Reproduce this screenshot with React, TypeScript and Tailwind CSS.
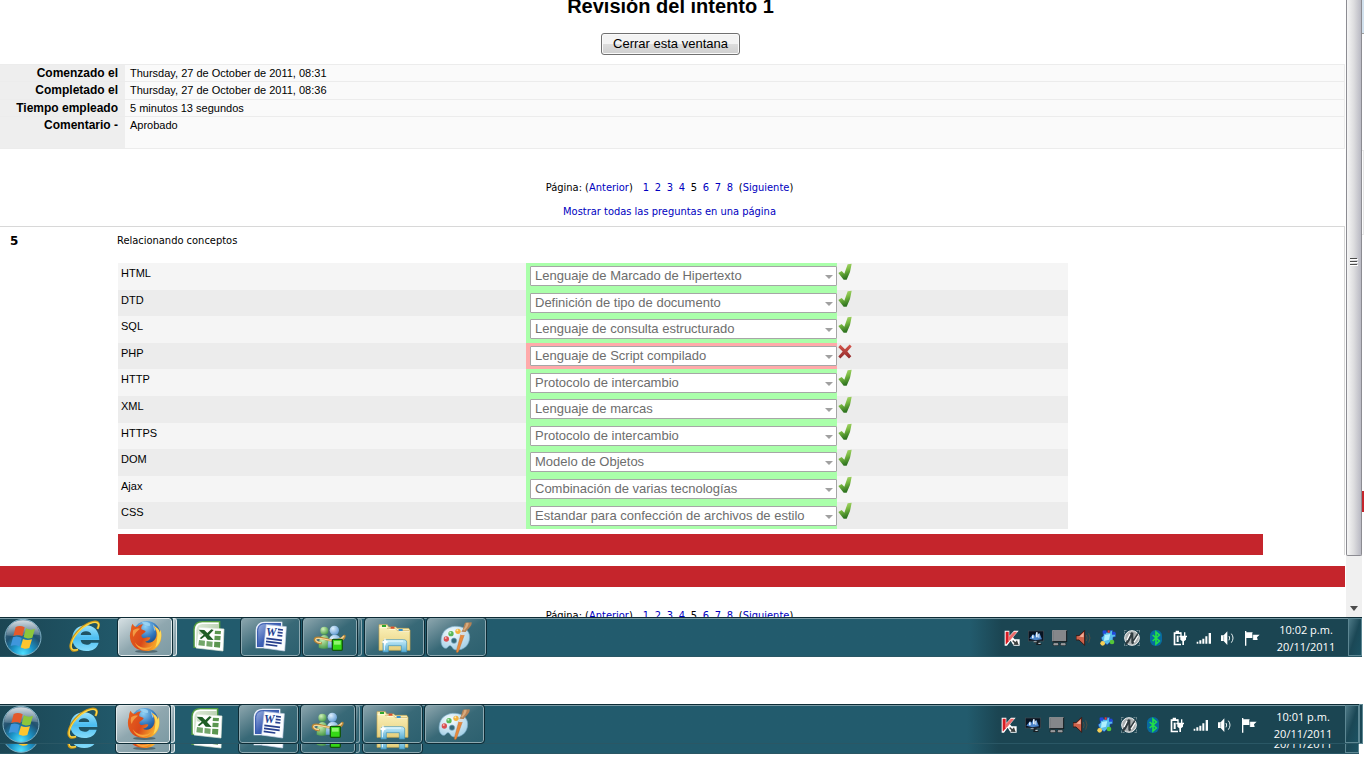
import type { ReactNode } from "react";

const attempt = [
  { label: "Comenzado el", value: "Thursday, 27 de October de 2011, 08:31", row: "h-[17px]" },
  { label: "Completado el", value: "Thursday, 27 de October de 2011, 08:36", row: "h-[18px]" },
  { label: "Tiempo empleado", value: "5 minutos 13 segundos", row: "h-[17px]" },
  { label: "Comentario -", value: "Aprobado", row: "h-8" },
];

const answers = [
  { term: "HTML", value: "Lenguaje de Marcado de Hipertexto", ok: true },
  { term: "DTD", value: "Definición de tipo de documento", ok: true },
  { term: "SQL", value: "Lenguaje de consulta estructurado", ok: true },
  { term: "PHP", value: "Lenguaje de Script compilado", ok: false },
  { term: "HTTP", value: "Protocolo de intercambio", ok: true },
  { term: "XML", value: "Lenguaje de marcas", ok: true },
  { term: "HTTPS", value: "Protocolo de intercambio", ok: true },
  { term: "DOM", value: "Modelo de Objetos", ok: true },
  { term: "Ajax", value: "Combinación de varias tecnologías", ok: true },
  { term: "CSS", value: "Estandar para confección de archivos de estilo", ok: true },
];

const humanist = "font-['DejaVu_Sans_Condensed','DejaVu_Sans',sans-serif]";

function Pagination() {
  return (
    <nav className={`flex justify-center text-[11px] leading-[18px] text-black ${humanist}`}>
      <span className="mr-[10px]">
        Página: (<a href="#anterior" className="text-[#0000c0]">Anterior</a>)
      </span>
      {[1, 2, 3, 4, 5, 6, 7, 8].map((n) =>
        n === 5 ? (
          <span key={n} className="w-3">{n}</span>
        ) : (
          <a key={n} href={`#p${n}`} className="w-3 text-[#0000c0]">{n}</a>
        ),
      )}
      <span>
        (<a href="#siguiente" className="text-[#0000c0]">Siguiente</a>)
      </span>
    </nav>
  );
}

function CheckMark() {
  return (
    <svg viewBox="0 0 42 51" className="h-[17px] w-[14px]" aria-label="Correcto">
      <defs>
        <linearGradient id="tick" x1="0" y1="0" x2="0.3" y2="1">
          <stop offset="0" stopColor="#c0e482" />
          <stop offset="0.5" stopColor="#7cbc42" />
          <stop offset="1" stopColor="#2f7420" />
        </linearGradient>
      </defs>
      <path d="M1 30 L11 24 L19 32 L29 4 L41 2 L36 27 L26 50 L17 50Z" fill="url(#tick)" />
    </svg>
  );
}

function CrossMark() {
  return (
    <svg viewBox="0 0 42 50" className="h-[17px] w-[14px]" aria-label="Incorrecto">
      <defs>
        <linearGradient id="cross" x1="0" y1="0" x2="0" y2="1">
          <stop offset="0" stopColor="#d8564c" />
          <stop offset="1" stopColor="#8f2a2c" />
        </linearGradient>
      </defs>
      <path d="M7 5 L21 18 L35 4 L41 10 L28 25 L40 39 L33 46 L20 33 L7 46 L1 40 L14 25 L1 12Z" fill="url(#cross)" />
    </svg>
  );
}

function StartOrb() {
  return (
    <svg viewBox="12 54 114 114" className="h-[38px] w-[38px]" aria-hidden="true">
      <defs>
        <radialGradient id="orb" cx="0.5" cy="0.95" r="0.95">
          <stop offset="0" stopColor="#4fe0ff" />
          <stop offset="0.3" stopColor="#1b94c8" />
          <stop offset="0.6" stopColor="#20516f" />
          <stop offset="1" stopColor="#52748a" />
        </radialGradient>
        <linearGradient id="orbShine" x1="0" y1="0" x2="0" y2="1">
          <stop offset="0" stopColor="#fff" stopOpacity="0.75" />
          <stop offset="1" stopColor="#fff" stopOpacity="0.15" />
        </linearGradient>
      </defs>
      <circle cx="69" cy="112" r="54" fill="url(#orb)" stroke="#7fb0c4" strokeWidth="3" />
      <path d="M18 106 C22 76 42 61 69 61 C96 61 116 76 120 106 C90 98 50 114 18 106Z" fill="url(#orbShine)" />
      <path d="M47 81 C56 76 65 77 74 82 L67 109 C58 104 50 104 40 108Z" fill="#e4592b" />
      <path d="M78 85 C87 90 95 90 105 86 L97 113 C88 117 80 116 71 111Z" fill="#8cc63c" />
      <path d="M39 112 C48 108 57 109 65 114 L58 140 C50 135 42 135 32 138Z" fill="#3f96dc" />
      <path d="M69 117 C78 121 86 121 96 118 L88 144 C79 148 71 147 62 142Z" fill="#fdc52f" />
    </svg>
  );
}

function ExplorerE() {
  return (
    <svg viewBox="207 54 96 114" className="h-[38px] w-8" aria-hidden="true">
      <defs>
        <linearGradient id="ie" x1="0" y1="0" x2="0" y2="1">
          <stop offset="0" stopColor="#9be2fb" />
          <stop offset="0.5" stopColor="#4bbdf1" />
          <stop offset="1" stopColor="#86dcfb" />
        </linearGradient>
      </defs>
      <path
        fillRule="evenodd"
        d="M258 76 C281 76 298 92 298 120 L242 120 C243 129 249 134 260 134 C267 134 271 132 273 128 L296 128 C291 145 278 153 259 153 C234 153 217 138 217 115 C217 92 234 76 258 76Z M242 105 L274 105 C273 98 267 94 258 94 C249 94 243 98 242 105Z"
        fill="url(#ie)"
      />
      <path d="M292 87 C303 68 292 59 268 69 C242 80 217 109 212 134 C209 152 220 155 234 149" fill="none" stroke="#c99618" strokeWidth="7" />
      <path d="M293 86 C301 69 291 62 269 71 C243 82 219 109 214 133 C211 149 220 153 234 148" fill="none" stroke="#fbd749" strokeWidth="4" />
    </svg>
  );
}

function Firefox() {
  return (
    <svg viewBox="384 54 99 114" className="h-[38px] w-[33px]" aria-hidden="true">
      <defs>
        <radialGradient id="globe" cx="0.45" cy="0.2" r="0.8">
          <stop offset="0" stopColor="#8fd1f5" />
          <stop offset="0.5" stopColor="#3177bd" />
          <stop offset="1" stopColor="#122e68" />
        </radialGradient>
        <linearGradient id="fox" x1="0" y1="0" x2="1" y2="0.4">
          <stop offset="0" stopColor="#e8621d" />
          <stop offset="0.55" stopColor="#d9481a" />
          <stop offset="1" stopColor="#f9ad2b" />
        </linearGradient>
      </defs>
      <ellipse cx="436" cy="154" rx="34" ry="5" fill="#2f4650" opacity="0.6" />
      <circle cx="437" cy="104" r="41" fill="url(#globe)" />
      <path d="M422 66 C440 64 452 70 446 78 C436 78 428 74 422 66Z M455 72 L470 88 L460 92Z" fill="#a9ddf7" opacity="0.7" />
      <path
        d="M395 71 C398 78 402 80 408 81 C414 75 421 73 427 73 C422 78 420 82 421 88 L434 93 C433 98 426 101 422 104 C420 108 422 112 427 114 C435 115 441 110 448 113 C448 118 440 123 432 125 C440 131 456 129 463 116 C470 103 466 92 458 77 C472 85 476 91 476 98 L479 90 C485 116 478 135 461 147 C444 157 417 155 401 142 C387 129 383 107 390 90 C390 83 391 77 395 71Z"
        fill="url(#fox)"
      />
      <path d="M458 77 C472 85 476 91 476 98 L479 90 C484 113 477 132 463 142 C468 128 468 120 469 108 C470 96 465 87 458 77Z" fill="#fed957" />
      <path d="M401 126 C412 145 440 149 457 136 C443 158 410 153 401 126Z" fill="#f8a43a" />
      <path d="M397 90 C403 86 411 84 417 86 C409 92 401 100 398 111 C394 104 395 96 397 90Z" fill="#f39a43" />
    </svg>
  );
}

function Excel() {
  return (
    <svg viewBox="579 54 96 114" className="h-[38px] w-8" aria-hidden="true">
      <defs>
        <linearGradient id="xl" x1="0" y1="0" x2="1" y2="1">
          <stop offset="0" stopColor="#e6efe0" />
          <stop offset="1" stopColor="#9fbd94" />
        </linearGradient>
      </defs>
      <path d="M582 142 V88 C583 72 592 65 607 65 H659 V142Z" fill="url(#xl)" stroke="#4e9a3e" strokeWidth="4" />
      <path d="M587 140 V90 C588 76 595 70 607 70 H655" fill="none" stroke="#fff" strokeWidth="4" />
      <path d="M597 82 L672 87 L669 153 L588 144Z" fill="#fff" stroke="#dbe7d7" strokeWidth="2" />
      <g fill="#5b9650">
        <path d="M645 92 L663 93 L662 103 L644 102Z M644 107 L662 108 L661 121 L643 120Z M643 125 L661 126 L660 143 L642 141Z" />
        <path d="M620 123 L638 125 L637 141 L619 139Z M597 120 L615 122 L614 138 L595 136Z" opacity="0.85" />
        <path d="M598 91 L609 92 L606 105 L597 103Z" opacity="0.35" />
      </g>
      <path d="M596 89 L613 90 L622 99 L634 88 L641 90 L627 105 L641 120 L623 119 L615 109 L604 117 L599 115 L611 104Z" fill="#1f5d25" />
    </svg>
  );
}

function Word() {
  return (
    <svg viewBox="43 54 96 114" className="h-[38px] w-8" aria-hidden="true">
      <defs>
        <linearGradient id="wd" x1="0" y1="0" x2="1" y2="1">
          <stop offset="0" stopColor="#a9bce6" />
          <stop offset="0.5" stopColor="#3f62b6" />
          <stop offset="1" stopColor="#1e3f97" />
        </linearGradient>
      </defs>
      <path d="M47 143 V91 C48 74 57 67 72 67 H123 V143Z" fill="url(#wd)" stroke="#e6edf8" strokeWidth="4" />
      <path d="M51 139 V92 C52 78 60 71 72 71 H120" fill="none" stroke="#3658ad" strokeWidth="3" />
      <path d="M77 74 L137 80 L132 153 L69 144Z" fill="#fbfdff" stroke="#c7d3ea" strokeWidth="2" />
      <text x="76" y="109" fontFamily="Liberation Serif, serif" fontSize="36" fontWeight="bold" fontStyle="italic" fill="#223f91">W</text>
      <path d="M112 88 L127 90 M111 97 L126 99 M110 106 L125 108 M77 115 L124 121 M76 124 L123 130 M75 133 L110 138" stroke="#263f8d" strokeWidth="5" />
    </svg>
  );
}

function Messenger() {
  return (
    <svg viewBox="220 54 102 114" className="h-[38px] w-[34px]" aria-hidden="true">
      <defs>
        <radialGradient id="msnG" cx="0.35" cy="0.3" r="0.8">
          <stop offset="0" stopColor="#d2f3bb" />
          <stop offset="1" stopColor="#3f9440" />
        </radialGradient>
        <radialGradient id="msnB" cx="0.35" cy="0.3" r="0.8">
          <stop offset="0" stopColor="#dff1ff" />
          <stop offset="1" stopColor="#5795cf" />
        </radialGradient>
      </defs>
      <path d="M314 105 C319 108 314 116 306 122" fill="none" stroke="#c58d34" strokeWidth="4" />
      <path d="M237 143 C237 119 242 105 254 105 C267 105 270 118 270 143 C260 147 246 147 237 143Z" fill="url(#msnG)" />
      <circle cx="254" cy="92" r="12" fill="url(#msnG)" />
      <path d="M264 143 C264 116 272 104 285 104 C300 104 306 116 306 143Z" fill="url(#msnB)" />
      <circle cx="284" cy="91" r="14" fill="url(#msnB)" />
      <path d="M246 130 C229 128 221 121 228 114 C239 108 259 120 281 122 C297 122 308 117 314 107" fill="none" stroke="#b78331" strokeWidth="7" />
      <path d="M244 128 C230 126 225 120 230 116 C240 111 259 121 281 121 C296 121 307 116 313 108" fill="none" stroke="#f5d69a" strokeWidth="4" />
      <rect x="278" y="118" width="30" height="33" rx="3" fill="#35d816" stroke="#12550f" strokeWidth="4" />
      <rect x="283" y="123" width="20" height="11" fill="#8ff56e" />
    </svg>
  );
}

function Folders() {
  return (
    <svg viewBox="415 54 102 114" className="h-[38px] w-[34px]" aria-hidden="true">
      <defs>
        <linearGradient id="fold" x1="0" y1="0" x2="0" y2="1">
          <stop offset="0" stopColor="#fcf3bd" />
          <stop offset="1" stopColor="#e6d07e" />
        </linearGradient>
        <linearGradient id="glass" x1="0" y1="0" x2="0" y2="1">
          <stop offset="0" stopColor="#c9effc" />
          <stop offset="1" stopColor="#58acd3" />
        </linearGradient>
      </defs>
      <path d="M418 151 V74 H443 L447 81 H468 L472 85 H507 L511 91 V151Z" fill="url(#fold)" stroke="#c8a850" strokeWidth="2" />
      <path d="M420 83 H443 L450 88 H472 L479 94 H509" fill="none" stroke="#fffbe0" strokeWidth="3" />
      <path d="M442 85 H466 L473 92 H509" fill="none" stroke="#c6a75b" strokeWidth="2" />
      <rect x="427" y="75" width="12" height="6" fill="#30a82b" />
      <rect x="453" y="80" width="11" height="6" fill="#df4c2d" />
      <rect x="477" y="87" width="12" height="6" fill="#3592cf" />
      <path d="M430 156 V127 C430 121 434 119 440 119 H491 C497 119 501 121 501 127 V156 H485 V137 H446 V156Z" fill="url(#glass)" stroke="#3f92b8" strokeWidth="2" />
      <path d="M434 151 V128 C434 124 436 123 442 123 H490" fill="none" stroke="#edfbff" strokeWidth="3" />
      <path d="M436 113 L439 122 L447 126 L439 130 L436 139 L433 130 L425 126 L433 122Z" fill="#fff" />
    </svg>
  );
}

function Paint() {
  return (
    <svg viewBox="601 54 99 114" className="h-[38px] w-[33px]" aria-hidden="true">
      <defs>
        <radialGradient id="pal" cx="0.4" cy="0.3" r="0.8">
          <stop offset="0" stopColor="#f8fdff" />
          <stop offset="1" stopColor="#9ccbe4" />
        </radialGradient>
      </defs>
      <path
        fillRule="evenodd"
        d="M644 79 C668 77 690 89 690 111 C690 137 671 151 650 150 C637 149 639 139 632 137 C624 136 625 148 614 144 C603 138 602 120 607 106 C613 89 627 81 644 79Z M643 114 A8 8 0 1 0 643 130 A8 8 0 1 0 643 114Z"
        fill="url(#pal)"
        stroke="#76a9c4"
        strokeWidth="2"
      />
      <circle cx="620" cy="117" r="8" fill="#d94f51" />
      <circle cx="634" cy="101" r="8" fill="#57b757" />
      <circle cx="655" cy="94" r="8" fill="#f3b23c" />
      <circle cx="618" cy="114" r="3" fill="#f7b5ae" />
      <circle cx="632" cy="98" r="3" fill="#bfeabd" />
      <circle cx="653" cy="91" r="3" fill="#fde4a3" />
      <path d="M663 104 L674 105 L656 156 C650 161 649 154 651 149Z" fill="#e78a3d" stroke="#b35d20" strokeWidth="1" />
      <path d="M666 94 L677 95 L674 106 L663 105Z" fill="#d7dde0" />
      <path d="M665 95 C672 87 671 78 676 68 L696 67 C697 79 687 84 678 96Z" fill="#b48256" />
      <path d="M670 89 C677 81 678 76 680 68 L687 68 C687 77 681 84 674 92Z" fill="#d8ab7d" />
    </svg>
  );
}

function TrayIcon({ label, children }: { label: string; children: ReactNode }) {
  return (
    <button type="button" aria-label={label} className="flex w-6 items-center justify-center">
      <svg viewBox="0 0 48 48" className="h-4 w-4">{children}</svg>
    </button>
  );
}

function Tray() {
  return (
    <div className="flex pt-[2px]">
      <TrayIcon label="Antivirus">
        <path d="M2 2 H16 V18 L30 2 H44 L27 22 L32 28 H47 V47 H29 L20 32 L9 47 H2Z" fill="#fff" />
        <path d="M5 5 H14 V22 V34 L7 43 H5Z" fill="#d71c24" />
        <path d="M13 22 L30 5 H40 L19 30 L13 34Z" fill="#ea6a6a" />
        <path d="M27 30 L34 36 L39 31 L44 45 L28 44 L31 40 L25 34Z" fill="#3c4140" />
      </TrayIcon>
      <TrayIcon label="Monitor de red">
        <rect x="1" y="3" width="46" height="30" fill="#071321" stroke="#464b50" strokeWidth="2" />
        <path d="M4 26 L15 12 L20 17 L25 6 L29 16 L34 8 L42 28 L22 31Z" fill="#4b83c7" />
        <path d="M24 7 H29 V22 H24Z M31 11 H34 V23 H31Z M12 16 H17 V25 H12Z" fill="#e9f4ff" />
        <path d="M18 34 H35 V39 H18Z M25 40 H40 V45 H25Z" fill="#171c20" />
        <path d="M17 34 H26 V37 H17Z M31 38 H38 V42 H31Z" fill="#b9c3c8" />
      </TrayIcon>
      <TrayIcon label="Pantalla táctil">
        <rect x="2" y="1" width="42" height="34" fill="#85878a" stroke="#131a1d" strokeWidth="3" />
        <path d="M2 34 V1 H44" fill="none" stroke="#d8dadb" strokeWidth="2" />
        <rect x="3" y="38" width="17" height="9" rx="4" fill="#999b9e" stroke="#141c20" strokeWidth="2" />
        <rect x="25" y="38" width="17" height="9" rx="4" fill="#999b9e" stroke="#141c20" strokeWidth="2" />
      </TrayIcon>
      <TrayIcon label="Audio HD">
        <path d="M0 17 H9 L26 1 V46 L9 30 H0Z" fill="#cf634b" stroke="#391b17" strokeWidth="3" />
        <path d="M4 19 H11 L23 8 V22Z" fill="#f2ad98" />
        <path d="M31 15 Q36 24 31 33 M38 10 Q46 24 38 38" fill="none" stroke="#514d42" strokeWidth="3" />
      </TrayIcon>
      <TrayIcon label="Complementos">
        <path d="M10 2 H19 V7 H30 V1 H38 V8 L47 9 V20 L39 22 V35 L30 37 L22 44 L10 38 L3 23 L10 18Z" fill="#56bde9" stroke="#1733a3" strokeWidth="2" />
        <path d="M14 15 L31 12 L27 29 L12 33Z" fill="#aeefff" />
        <path d="M8 2 H18 V11 H8Z M36 5 H46 V14 H36Z" fill="#2248dd" />
        <circle cx="8" cy="40" r="7" fill="#f6cf55" />
        <circle cx="36" cy="36" r="7" fill="#55c638" />
        <rect x="23" y="1" width="6" height="7" fill="#e43a36" />
      </TrayIcon>
      <TrayIcon label="Nero">
        <circle cx="24" cy="24" r="22" fill="#a9afb0" stroke="#eff1f1" strokeWidth="3" />
        <path d="M1 10 V1 H10 M38 1 H47 V10 M47 38 V47 H38 M10 47 H1 V38" fill="none" stroke="#eff1f1" strokeWidth="2" strokeDasharray="3 3" />
        <path d="M5 37 C12 31 14 16 22 7 L28 8 V28 C34 20 38 9 46 5 C39 18 35 33 27 43 L22 40 V22 C17 31 14 42 5 45Z" fill="#303b3f" />
        <path d="M9 30 L18 12 M30 37 L42 18" stroke="#fff" strokeWidth="4" />
      </TrayIcon>
      <TrayIcon label="Bluetooth">
        <rect x="6" y="0" width="36" height="48" rx="17" fill="#086aa0" />
        <path d="M14 15 L34 33 L24 42 V6 L34 15 L14 33" fill="none" stroke="#22df47" strokeWidth="5" />
      </TrayIcon>
      <TrayIcon label="Energía">
        <path d="M5 7 H11 V2 H21 V7 H27 V12 H10 V41 H27 V46 H5Z" fill="#fff" />
        <path d="M14 17 H20 V36 H14Z" fill="#fff" />
        <path d="M22 17 H25 V7 H29 V17 H36 V7 H40 V17 H45 V22 H42 V29 L36 34 V45 H31 V34 L25 29 V22 H22Z" fill="#fff" />
      </TrayIcon>
      <TrayIcon label="Red inalámbrica">
        <path d="M2 35 H7 V41 H2Z M10 31 H16 V41 H10Z M19 26 H25 V41 H19Z M28 19 H34 V41 H28Z M38 9 H45 V41 H38Z" fill="#fff" />
      </TrayIcon>
      <TrayIcon label="Volumen">
        <path d="M3 16 H11 L22 4 V45 L11 33 H3Z" fill="#fff" />
        <path d="M11 17 V32" stroke="#779196" strokeWidth="2" />
        <path d="M27 18 Q31 24 27 31 M34 11 Q44 24 34 38" fill="none" stroke="#e8f1f2" strokeWidth="3" />
      </TrayIcon>
      <TrayIcon label="Centro de actividades">
        <path d="M3 3 H7 V47 H3Z M7 7 H26 V14 H47 L39 22 L41 30 H26 V24 H7Z" fill="#fff" />
        <path d="M26 8 V30" stroke="#1b4552" strokeWidth="2" />
      </TrayIcon>
    </div>
  );
}

function AppButton({
  label,
  active = false,
  stacked = false,
  children,
}: {
  label: string;
  active?: boolean;
  stacked?: boolean;
  children: ReactNode;
}) {
  const tone = active
    ? "bg-linear-to-br from-[#d5dfe2] via-[#8fa7af] to-[#7d9ba4] border-[#e0e9eb]"
    : "bg-linear-to-br from-[#8ba5ad] via-[#386977] to-[#2c606f] border-[#8da9b1]";
  return (
    <div className="flex h-10 w-[59px] py-px">
      <button
        type="button"
        aria-label={label}
        className={`flex flex-1 items-center justify-center rounded-[3px] border outline-1 outline-[#0d2b35] ${tone}`}
      >
        {children}
      </button>
      {stacked && <span className={`ml-px w-1 rounded-r-[3px] border border-l-0 ${tone}`} />}
    </div>
  );
}

function TaskBar({ time, paint = true }: { time: string; paint?: boolean }) {
  return (
    <div className="flex h-10 shrink-0 items-stretch border-y border-t-[#0e2c36] border-b-[#2a5765] bg-linear-to-r from-[#1b4654] from-0% via-[#225b6d] via-10% to-[#225b6d] shadow-[inset_0_1px_0_#7a9aa4]">
      <div className="-my-px flex items-center">
        <button type="button" aria-label="Inicio" className="ml-1 mr-[27px]"><StartOrb /></button>
        <button type="button" aria-label="Internet Explorer" className="mr-[17px]"><ExplorerE /></button>
        <AppButton label="Firefox" active stacked><Firefox /></AppButton>
        <button type="button" aria-label="Excel" className="mx-4"><Excel /></button>
        <div className="flex gap-[3px]">
          <AppButton label="Word"><Word /></AppButton>
          <AppButton label="Messenger" stacked><Messenger /></AppButton>
          <AppButton label="Explorador de Windows"><Folders /></AppButton>
          {paint && <AppButton label="Paint"><Paint /></AppButton>}
        </div>
      </div>
      <div className="ml-auto flex items-stretch bg-linear-to-r from-transparent to-[#1b4552] to-8% pl-[30px] shadow-[inset_0_1px_0_#7a9aa4]">
        <Tray />
        <div className="flex w-[84px] flex-col items-center justify-center pt-[2px] font-['Open_Sans','Noto_Sans',sans-serif] text-[11px] leading-[17px] text-white">
          <span>{time}</span>
          <span>20/11/2011</span>
        </div>
        <button
          type="button"
          aria-label="Mostrar escritorio"
          className="w-[14px] border border-[#5d8793] bg-linear-to-br from-[#4d7986] via-[#1b4856] to-[#1c5262]"
        />
      </div>
    </div>
  );
}

function ScrollBar() {
  return (
    <div className="ml-px flex w-4 shrink-0 flex-col bg-[#f0f0f0]">
      <div className="flex h-[556px] flex-col items-center justify-start rounded-b-[2px] border border-t-0 border-[#8c8c92] bg-linear-to-r from-[#f6f6f6] via-[#dcdcde] to-[#b9b9c3] pt-[257px]">
        <svg viewBox="0 0 8 9" className="h-[9px] w-2" aria-hidden="true">
          <path d="M0 1.5 H7 M0 4.5 H7 M0 7.5 H7" stroke="#4c4c4c" />
          <path d="M0 2.5 H8 M0 5.5 H8 M0 8.5 H8" stroke="#fff" />
        </svg>
      </div>
      <div className="flex flex-1 items-end justify-center pb-[6px]">
        <svg viewBox="0 0 8 5" className="h-[5px] w-2" aria-hidden="true">
          <path d="M0 0 H8 L4 5Z" fill="#4c4c4c" />
        </svg>
      </div>
    </div>
  );
}

export default function App() {
  return (
    <div className="min-h-screen overflow-hidden bg-white font-['Liberation_Sans',Arial,sans-serif] text-black">
      <div className="flex">
        <main className="min-w-0 flex-1">
          <div className="pr-1 text-center">
            <h1 className="text-[20px] leading-3 font-bold">Revisión del intento 1</h1>
            <button
              type="button"
              className="mx-auto mt-[21px] mb-[9px] block h-[22px] w-[139px] rounded-[3px] border border-[#707070] bg-linear-to-b from-[#f3f3f3] from-50% via-[#dddddd] via-50% to-[#cfcfcf] text-[13px] leading-5 shadow-[inset_0_0_0_1px_#fafafa]"
            >
              Cerrar esta ventana
            </button>
          </div>

          <table className="w-full border-collapse text-[11px] leading-[15px]">
            <tbody>
              {attempt.map((r) => (
                <tr key={r.label} className={`border-y border-r border-[#ececec] ${r.row}`}>
                  <th scope="row" className="w-[125px] bg-[#eeeeee] p-0 pt-px pr-[7px] text-right align-top text-[12px]">{r.label}</th>
                  <td className="bg-[#fafafa] p-0 pt-px pl-[5px] align-top">{r.value}</td>
                </tr>
              ))}
            </tbody>
          </table>

          <div className="pt-[30px] pr-[6px] pb-[5px]">
            <Pagination />
            <p className={`mt-[6px] text-center text-[11px] leading-[18px] ${humanist}`}>
              <a href="#todas" className="text-[#0000c0]">Mostrar todas las preguntas en una página</a>
            </p>
          </div>

          <section className="border-t border-r border-[#d8d8d8]">
            <div className="flex pt-[5px]">
              <h2 className="w-[117px] pl-[10px] font-['DejaVu_Sans',sans-serif] text-[12px] leading-[18px] font-bold">5</h2>
              <p className={`text-[11px] leading-[18px] ${humanist}`}>Relacionando conceptos</p>
            </div>
            <div className="mt-[13px] mr-[81px] ml-[118px]">
              <table className="h-[266px] w-[83%] border-collapse">
                <tbody>
                  {answers.map((a) => (
                    <tr key={a.term} className="odd:bg-[#f5f5f5] even:bg-[#ececec]">
                      <td className="w-[408px] p-0 pt-1 pl-[3px] align-top text-[11px] leading-3">
                        <label htmlFor={`r-${a.term}`}>{a.term}</label>
                      </td>
                      <td className={`w-[311px] p-0 pl-1 ${a.ok ? "bg-[#aaffaa]" : "bg-[#ffaaaa]"}`}>
                        <div className="relative">
                          <select
                            id={`r-${a.term}`}
                            disabled
                            className="block h-5 w-full appearance-none rounded-[1px] border border-[#a6a6a6] bg-white pl-1 text-[13px] leading-[18px] text-[#6d6d6d] opacity-100"
                          >
                            <option>{a.value}</option>
                          </select>
                          <svg viewBox="0 0 8 4" className="pointer-events-none absolute top-[9px] right-1 h-1 w-2" aria-hidden="true">
                            <path d="M0 0 H8 L4 4Z" fill="#a0a0a0" />
                          </svg>
                        </div>
                      </td>
                      <td className="p-0 pl-px align-top">{a.ok ? <CheckMark /> : <CrossMark />}</td>
                    </tr>
                  ))}
                </tbody>
              </table>
              <div className="mt-[5px] h-[21px] bg-[#c5252c]" />
            </div>
          </section>
          <div className="mt-[11px] h-[21px] bg-[#c5252c]" />
          <div className="mt-5 h-[10px] overflow-hidden pr-[6px]">
            <Pagination />
          </div>
        </main>
        <ScrollBar />
        <div className="mr-[2px] flex w-[2px] shrink-0 flex-col">
          <div className="h-[34px] border-b border-[#a0a0a0] bg-[#d3e2ee]" />
          <div className="mt-[116px] h-[85px] border-y border-r border-[#e8e8e8]" />
          <div className="mt-[256px] h-[21px] bg-[#c5252c]" />
        </div>
      </div>

      <div className="pr-1">
        <TaskBar time="10:02 p.m." />
      </div>

      <div className="mt-[47px] flex overflow-hidden pr-[3px]">
        <div className="-ml-[2px] min-w-0 flex-1">
          <TaskBar time="10:01 p.m." />
          <div className="flex h-[10px] flex-col justify-end overflow-hidden" aria-hidden="true">
            <TaskBar time="10:01 p.m." paint={false} />
          </div>
        </div>
        <div className="h-10 w-1 border border-[#5d8793] bg-[#1b4856]" />
      </div>
    </div>
  );
}
